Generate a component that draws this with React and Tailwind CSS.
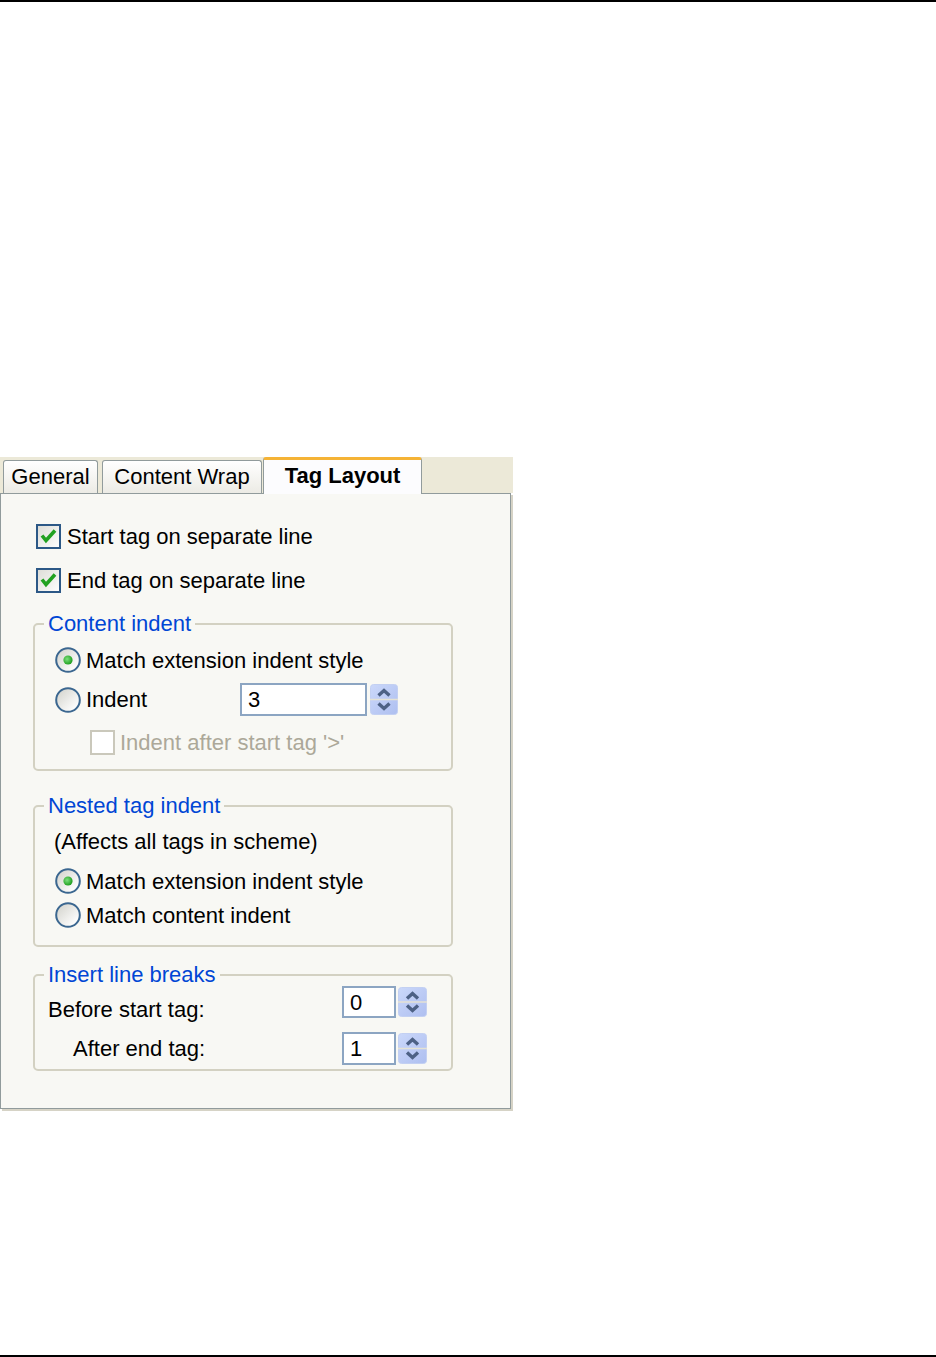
import React from "react";

function Defs() {
  return (
    <svg className="block h-0 w-0" aria-hidden="true">
      <defs>
        <linearGradient id="boxFill" x1="0" y1="0" x2="1" y2="1">
          <stop offset="0" stopColor="#dcdcd6" />
          <stop offset="1" stopColor="#ffffff" />
        </linearGradient>
        <linearGradient id="radioFill" x1="0.15" y1="0.15" x2="0.85" y2="0.85">
          <stop offset="0" stopColor="#d8d8d2" />
          <stop offset="1" stopColor="#ffffff" />
        </linearGradient>
        <radialGradient id="dotFill" cx="0.4" cy="0.4" r="0.6">
          <stop offset="0" stopColor="#7ee07e" />
          <stop offset="1" stopColor="#1f9f1f" />
        </radialGradient>
        <linearGradient id="spinFill" x1="0" y1="0" x2="1" y2="1">
          <stop offset="0" stopColor="#cbd8fa" />
          <stop offset="1" stopColor="#aebff0" />
        </linearGradient>
      </defs>
    </svg>
  );
}

function Check({ checked, disabled }) {
  return (
    <svg width="25" height="25" viewBox="0 0 25 25" className="shrink-0">
      <rect
        x="1"
        y="1"
        width="23"
        height="23"
        fill={disabled ? "#ffffff" : "url(#boxFill)"}
        stroke={disabled ? "#cac8bb" : "#2c5886"}
        strokeWidth="2"
      />
      {checked && <path d="M6 11.5 L10 16.5 L19 6.5" fill="none" stroke="#21a121" strokeWidth="3.6" />}
    </svg>
  );
}

function Radio({ on }) {
  return (
    <svg width="26" height="26" viewBox="0 0 26 26" className="shrink-0">
      <circle cx="13" cy="13" r="11.8" fill="url(#radioFill)" stroke="#3b6790" strokeWidth="2" />
      {on && <circle cx="13" cy="13" r="4.6" fill="url(#dotFill)" />}
    </svg>
  );
}

function Spin({ w = 28, h = 31 }) {
  const cx = w / 2;
  return (
    <svg width={w} height={h} viewBox={`0 0 ${w} ${h}`} className="shrink-0">
      <rect x="0.5" y="0.5" width={w - 1} height={h - 1} rx="3" fill="url(#spinFill)" stroke="#c3d0f2" />
      <line x1="0" y1={h / 2} x2={w} y2={h / 2} stroke="#e4e2d4" strokeWidth="1.5" />
      <path d={`M${cx - 5.5} 11.5 L${cx} 6.5 L${cx + 5.5} 11.5`} fill="none" stroke="#4d6185" strokeWidth="3.4" />
      <path d={`M${cx - 5.5} ${h - 11.5} L${cx} ${h - 6.5} L${cx + 5.5} ${h - 11.5}`} fill="none" stroke="#4d6185" strokeWidth="3.4" />
    </svg>
  );
}

function Field({ value, width }) {
  return (
    <div className={`flex h-full items-center border-2 border-[#8ca5c2] bg-white pl-[6px] ${width}`}>
      {value}
    </div>
  );
}

function Group({ title, className, inner, children }) {
  return (
    <fieldset className={`w-[420px] rounded-[5px] border-2 border-[#d3d1c2] ${className}`}>
      <legend className="ml-[9px] px-[4px] leading-[22px] text-[#0046d5]">{title}</legend>
      <div className={inner}>{children}</div>
    </fieldset>
  );
}

export default function App() {
  return (
    <div className="flex h-[1357px] w-[936px] flex-col bg-white font-['Liberation_Sans',Arial,sans-serif] text-[22px] text-black">
      <Defs />
      <div className="h-[2px] bg-black" />

      <div className="mt-[455px] w-[513px]">
        {/* tab strip */}
        <div className="flex h-[36px] items-end bg-[#ece9d8] pl-[3px]">
          <div className="flex h-[33px] w-[95px] items-center justify-center rounded-t-[3px] border border-b-0 border-[#919b9c] bg-linear-to-b from-white to-[#ecebe5] pb-[1px]">
            General
          </div>
          <div className="ml-[4px] flex h-[33px] w-[160px] items-center justify-center rounded-t-[3px] border border-b-0 border-[#919b9c] bg-linear-to-b from-white to-[#ecebe5] pb-[1px]">
            Content Wrap
          </div>
          <div className="relative z-10 -mb-[1px] ml-[1px] flex h-[37px] w-[159px] items-center justify-center rounded-t-[3px] border border-b-0 border-t-[3px] border-[#919b9c] border-t-[#f5b335] bg-[#fcfcfe] pb-[3px] font-bold">
            Tag Layout
          </div>
        </div>

        {/* body */}
        <div className="h-[616px] w-[511px] border border-[#919b9c] bg-[#f8f8f4] pl-[32px] pt-[29px] shadow-[2px_2px_0_#d6d3c6]">
          <div className="ml-[3px] flex h-[26px] items-center gap-[6px]">
            <Check checked />
            <span>Start tag on separate line</span>
          </div>
          <div className="ml-[3px] mt-[18px] flex h-[26px] items-center gap-[6px]">
            <Check checked />
            <span>End tag on separate line</span>
          </div>

          <Group title="Content indent" className="mt-[20px] pb-[14px] pt-[12px]" inner="pl-[20px]">
            <div className="flex h-[26px] items-center gap-[5px]">
              <Radio on />
              <span>Match extension indent style</span>
            </div>
            <div className="mt-[10px] flex h-[33px] items-center">
              <Radio />
              <span className="ml-[5px] w-[154px]">Indent</span>
              <Field value="3" width="w-[127px]" />
              <div className="ml-[3px]">
                <Spin w={28} h={31} />
              </div>
            </div>
            <div className="ml-[35px] mt-[13px] flex h-[26px] items-center gap-[5px] text-[#aca899]">
              <Check disabled />
              <span>Indent after start tag '&gt;'</span>
            </div>
          </Group>

          <Group title="Nested tag indent" className="mt-[24px] pb-[17px] pt-[11px]" inner="pl-[19px]">
            <div className="flex h-[26px] items-center">(Affects all tags in scheme)</div>
            <div className="ml-[1px] mt-[14px] flex h-[26px] items-center gap-[5px]">
              <Radio on />
              <span>Match extension indent style</span>
            </div>
            <div className="ml-[1px] mt-[8px] flex h-[26px] items-center gap-[5px]">
              <Radio />
              <span>Match content indent</span>
            </div>
          </Group>

          <Group title="Insert line breaks" className="mt-[17px] pb-[4px]" inner="pr-[24px]">
            <div className="flex h-[32px] items-center">
              <span className="pl-[13px] pt-[14px]">Before start tag:</span>
              <div className="ml-auto flex h-full items-center">
                <Field value="0" width="w-[54px]" />
                <div className="ml-[2px]">
                  <Spin w={29} h={30} />
                </div>
              </div>
            </div>
            <div className="mt-[14px] flex h-[33px] items-center">
              <span className="pl-[38px]">After end tag:</span>
              <div className="ml-auto flex h-full items-center">
                <Field value="1" width="w-[54px]" />
                <div className="ml-[2px]">
                  <Spin w={29} h={31} />
                </div>
              </div>
            </div>
          </Group>
        </div>
      </div>

      <div className="mt-auto h-[2px] bg-black" />
    </div>
  );
}
